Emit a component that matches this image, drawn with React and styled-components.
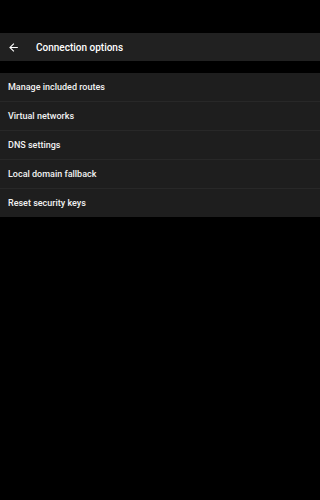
import React from 'react';
import styled, { createGlobalStyle } from 'styled-components';

const GlobalStyle = createGlobalStyle`
    html, body {
        margin : 0;
        padding : 0;
        background-color : #000000;
    }
    body {
        font-family : Roboto, "Liberation Sans", sans-serif;
    }
`;

const items = [
    'Manage included routes',
    'Virtual networks',
    'DNS settings',
    'Local domain fallback',
    'Reset security keys',
];

const App = () => {
    return (
        <Screen>
            <GlobalStyle />
            <StatusBar />
            <AppBar>
                <BackButton aria-label="Back">
                    <svg width="13" height="13" viewBox="0 0 24 24">
                        <path d="M20 11H7.83l5.59-5.59L12 4l-8 8 8 8 1.41-1.41L7.83 13H20v-2z" fill="#ffffff" />
                    </svg>
                </BackButton>
                <Title>Connection options</Title>
            </AppBar>
            <List>
                {items.map((label, i) => (
                    <Row key={label} $last={i === items.length - 1}>{label}</Row>
                ))}
            </List>
        </Screen>
    );
};

export default App;

const Screen = styled.div`
    width : 100%;
    min-height : 500px;
    background-color : #000000;
    display : flex;
    flex-direction : column;
`;

const StatusBar = styled.div`
    height : 33px;
`;

const AppBar = styled.div`
    height : 28px;
    background-color : #212121;
    display : flex;
    align-items : center;
    margin-bottom : 12px;
`;

const BackButton = styled.div`
    width : 29.5px;
    padding-left : 6.5px;
    display : flex;
    align-items : center;
    svg {
        display : block;
    }
`;

const Title = styled.div`
    color : #ffffff;
    font-size : 10px;
    font-weight : 500;
`;

const List = styled.div`
    background-color : #1e1e1e;
    display : flex;
    flex-direction : column;
`;

const Row = styled.div`
    height : 28px;
    padding-left : 8px;
    display : flex;
    align-items : center;
    color : #f2f2f2;
    font-size : 9px;
    font-weight : 500;
    border-bottom : ${props => props.$last ? 'none' : '1px solid #282828'};
`;
